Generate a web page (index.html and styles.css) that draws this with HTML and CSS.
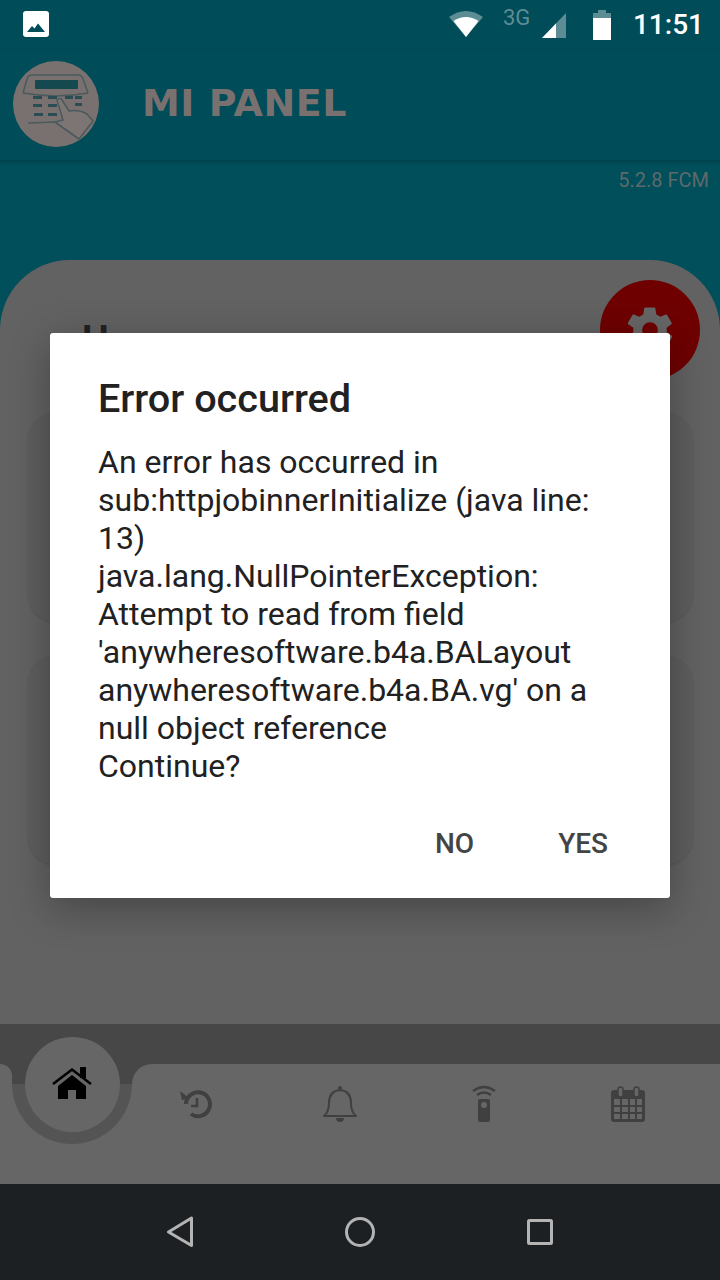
FILE: index.html
```html
<!DOCTYPE html>
<html lang="en">
<head>
    <meta charset="UTF-8">
    <meta name="viewport" content="width=device-width, initial-scale=1.0">
    <title>Mi Panel</title>
    <link rel="stylesheet" href="styles.css">
</head>
<body>
    <div class="screen">
        <div class="status-bar">
            <svg class="photo-icon" width="26" height="26" viewBox="0 0 26 26">
                <rect width="26" height="26" rx="3" fill="#fff"/>
                <path d="M4 21 L9 15 L11.500 17.500 L15 12.500 L22 21 Z" fill="#004c58"/>
            </svg>
            <div class="status-right">
                <svg class="wifi" width="34" height="27" viewBox="0 0 34 27">
                    <path d="M0 7 Q17 -5 34 7 L17 27 Z" fill="#5c8d95"/>
                    <path d="M4.500 11 Q17 3 29.500 11 L17 27 Z" fill="#fff"/>
                </svg>
                <span class="net-type">3G</span>
                <svg class="signal" width="24" height="25" viewBox="0 0 24 25">
                    <path d="M0 25 L24 0 L24 25 Z" fill="#5c8d95"/>
                    <path d="M0 25 L14 10.500 L14 25 Z" fill="#fff"/>
                </svg>
                <svg class="battery" width="18" height="30" viewBox="0 0 18 30">
                    <path d="M5 0 H13 V3 H18 V9 H0 V3 H5 Z" fill="#5c8d95"/>
                    <rect y="8" width="18" height="22" fill="#fff"/>
                </svg>
                <span class="clock">11:51</span>
            </div>
        </div>

        <header class="app-bar">
            <svg class="logo" width="86" height="86" viewBox="0 0 86 86">
                <circle cx="43" cy="43" r="43" fill="#78716f"/>
                <path d="M10 32 L14 18 Q15 14 19 14 H65 Q69 14 70 18 L75 32" fill="none" stroke="#4a5a5c" stroke-width="1.500"/>
                <path d="M10 32 Q43 38 75 32" fill="none" stroke="#4a5a5c" stroke-width="1.500"/>
                <rect x="22" y="19" width="43" height="9" rx="1" fill="#14494f"/>
                <g fill="#2a4d54">
                    <rect x="20" y="35" width="9" height="3"/>
                    <rect x="35" y="35" width="9" height="3"/>
                    <rect x="52" y="35" width="8" height="3"/>
                    <rect x="62" y="35" width="7" height="3"/>
                    <rect x="20" y="43" width="9" height="3"/>
                    <rect x="35" y="43" width="9" height="3"/>
                    <rect x="62" y="42" width="7" height="3"/>
                    <rect x="21" y="52" width="9" height="3"/>
                    <rect x="35" y="52" width="9" height="3"/>
                </g>
                <path d="M44 39 Q47 36 49 39 L56 50 Q66 48 74 53 L80 60 L66 78 L42 61 L50 59 Z" fill="#7c7573" stroke="#4a5a5c" stroke-width="1.500"/>
                <path d="M15 62 L42 61 L66 78" fill="none" stroke="#4a5a5c" stroke-width="1.500"/>
            </svg>
            <span class="brand">MI PANEL</span>
        </header>

        <div class="content">
            <div class="version">5.2.8 FCM</div>
            <main class="panel">
                <h2 class="panel-title">H</h2>
                <div class="card"></div>
                <div class="card"></div>
                <button class="fab">
                    <svg width="54" height="54" viewBox="0 0 24 24">
                        <path fill="#666" d="M19.400 13a7.600 7.600 0 0 0 0-2l2.100-1.600a.5.5 0 0 0 .1-.6l-2-3.500a.5.5 0 0 0-.6-.2l-2.500 1a7.400 7.400 0 0 0-1.700-1l-.4-2.600a.5.5 0 0 0-.5-.5h-4a.5.5 0 0 0-.5.4l-.4 2.700a7.600 7.600 0 0 0-1.700 1l-2.500-1a.5.5 0 0 0-.6.2l-2 3.500a.5.5 0 0 0 .1.6L4.600 11a7.600 7.600 0 0 0 0 2l-2.100 1.600a.5.5 0 0 0-.1.6l2 3.500a.5.5 0 0 0 .6.2l2.500-1a7.400 7.400 0 0 0 1.700 1l.4 2.600a.5.5 0 0 0 .5.5h4a.5.5 0 0 0 .5-.4l.4-2.700a7.600 7.600 0 0 0 1.700-1l2.500 1a.5.5 0 0 0 .6-.2l2-3.500a.5.5 0 0 0-.1-.6zM12 15.500a3.500 3.500 0 1 1 0-7 3.500 3.500 0 0 1 0 7z"/>
                    </svg>
                </button>
            </main>
        </div>

        <nav class="tab-bar">
            <div class="tab-stub"></div>
            <div class="tab-home">
                <div class="home-ring">
                    <div class="home-circle">
                        <svg width="40" height="34" viewBox="0 0 40 34">
                            <rect x="28" y="0" width="6" height="11" fill="#000"/>
                            <path d="M1 17 L20 2.500 L39 17" fill="none" stroke="#000" stroke-width="2.500"/>
                            <path d="M6 19 L20 8 L34 19 V32 H24 V23 H16 V32 H6 Z" fill="#000"/>
                        </svg>
                    </div>
                </div>
            </div>
            <div class="tab-items">
                <svg class="tab-icon tab-history" width="32" height="32" viewBox="0 0 32 32">
                    <path d="M6 16 A12 12 0 1 1 11 26" fill="none" stroke="#404040" stroke-width="4"/>
                    <path d="M0 3 L9 10 L2 12 Z" fill="#404040"/>
                    <path d="M17 10 V18 H11" fill="none" stroke="#404040" stroke-width="2.500"/>
                </svg>
                <svg class="tab-icon tab-bell" width="34" height="37" viewBox="0 0 34 37">
                    <path d="M1 31 Q6 27 6 18 Q6 6 17 5 Q28 6 28 18 Q28 27 33 31 Z" fill="none" stroke="#404040" stroke-width="2" stroke-linejoin="round"/>
                    <circle cx="17" cy="3" r="2" fill="#404040"/>
                    <path d="M13 33 A4 4 0 0 0 21 33 Z" fill="#404040"/>
                </svg>
                <svg class="tab-icon tab-remote" width="24" height="37" viewBox="0 0 24 37">
                    <path d="M1 6 Q12 -2 23 6 M5 10 Q12 5 19 10" fill="none" stroke="#404040" stroke-width="2.500"/>
                    <rect x="6" y="14" width="12" height="23" rx="2" fill="#404040"/>
                    <circle cx="12" cy="20" r="3" fill="#666"/>
                </svg>
                <svg class="tab-icon tab-calendar" width="34" height="36" viewBox="0 0 34 36">
                    <rect y="4" width="34" height="32" rx="3" fill="#404040"/>
                    <g fill="#666">
                        <rect x="3" y="13" width="6" height="6"/>
                        <rect x="11" y="13" width="6" height="6"/>
                        <rect x="19" y="13" width="5" height="6"/>
                        <rect x="26" y="13" width="5" height="6"/>
                        <rect x="3" y="21" width="6" height="5"/>
                        <rect x="11" y="21" width="6" height="5"/>
                        <rect x="19" y="21" width="5" height="5"/>
                        <rect x="26" y="21" width="5" height="5"/>
                        <rect x="3" y="28" width="6" height="5"/>
                        <rect x="11" y="28" width="6" height="5"/>
                        <rect x="19" y="28" width="5" height="5"/>
                        <rect x="26" y="28" width="5" height="5"/>
                    </g>
                    <rect x="7" y="1" width="5" height="10" rx="2.500" fill="#666" stroke="#404040" stroke-width="1.500"/>
                    <rect x="23" y="1" width="5" height="10" rx="2.500" fill="#666" stroke="#404040" stroke-width="1.500"/>
                </svg>
            </div>
        </nav>

        <div class="system-nav">
            <svg width="28" height="32" viewBox="0 0 28 32">
                <path d="M25.500 2 V29.500 L2.500 16 Z" fill="none" stroke="#b4b4b4" stroke-width="3" stroke-linejoin="round"/>
            </svg>
            <svg width="32" height="32" viewBox="0 0 32 32">
                <circle cx="16" cy="16" r="13.500" fill="none" stroke="#b4b4b4" stroke-width="3"/>
            </svg>
            <svg width="28" height="28" viewBox="0 0 28 28">
                <rect x="2.500" y="2.500" width="23" height="23" rx="1" fill="none" stroke="#b4b4b4" stroke-width="3"/>
            </svg>
        </div>

        <div class="dialog">
            <h1 class="dialog-title">Error occurred</h1>
            <p class="dialog-body">An error has occurred in<br>sub:httpjobinnerInitialize (java line:<br>13)<br>java.lang.NullPointerException:<br>Attempt to read from field<br>'anywheresoftware.b4a.BALayout<br>anywheresoftware.b4a.BA.vg' on a<br>null object reference<br>Continue?</p>
            <div class="dialog-actions">
                <button class="dialog-btn">NO</button>
                <button class="dialog-btn">YES</button>
            </div>
        </div>
    </div>
</body>
</html>
```

FILE: styles.css
```css
body {
    margin: 0;
    font-family: Roboto, sans-serif;
    background-color: #000;
}

.screen {
    position: relative;
    width: 720px;
    height: 1280px;
    overflow: hidden;
    display: flex;
    flex-direction: column;
    background-color: #004c58;
}

.status-bar {
    height: 50px;
    flex: none;
    display: flex;
    justify-content: space-between;
    align-items: center;
    padding: 0 16px 0 23px;
}

.photo-icon {
    margin-bottom: 2px;
}

.status-right {
    display: flex;
    align-items: flex-start;
    padding-top: 5px;
    height: 40px;
    box-sizing: border-box;
}

.net-type {
    margin-left: 20px;
    width: 39px;
    font-size: 22px;
    line-height: 16px;
    color: #5c8d95;
}

.signal {
    margin-top: 3px;
}

.battery {
    margin-left: 27px;
}

.clock {
    margin-left: 22px;
    font-size: 28px;
    font-weight: 500;
    line-height: 30px;
    color: #fff;
}

.app-bar {
    height: 110px;
    flex: none;
    display: flex;
    align-items: center;
    padding-left: 13px;
    box-sizing: border-box;
    box-shadow: 0 2px 4px rgba(0, 0, 0, 0.2);
    position: relative;
}

.logo {
    margin-bottom: 3px;
}

.brand {
    margin-left: 43px;
    margin-bottom: 4px;
    font-family: "DejaVu Sans", sans-serif;
    font-size: 38px;
    font-weight: 700;
    letter-spacing: 0.5px;
    color: #78716f;
}

.content {
    flex: 1;
    display: flex;
    flex-direction: column;
    background-color: #004f5b;
}

.version {
    height: 100px;
    flex: none;
    padding: 8px 11px 0 0;
    box-sizing: border-box;
    text-align: right;
    font-size: 20px;
    line-height: 24px;
    color: #5d6a6c;
}

.panel {
    flex: 1;
    position: relative;
    padding: 59px 28px 0;
    background-color: #626263;
    border-radius: 70px 70px 0 0;
}

.panel-title {
    margin: 0 0 0 54px;
    height: 93px;
    font-size: 38px;
    line-height: 42px;
    font-weight: 700;
    color: #222;
}

.card {
    width: 665px;
    height: 210px;
    margin-bottom: 33px;
    box-sizing: border-box;
    border-radius: 28px;
    background-color: #5e5e5e;
    box-shadow: 0 1px 2px rgba(0, 0, 0, 0.12);
}

.fab {
    position: absolute;
    top: 20px;
    left: 600px;
    width: 100px;
    height: 100px;
    padding: 0;
    display: flex;
    align-items: center;
    justify-content: center;
    border: none;
    border-radius: 50%;
    background-color: #6e0000;
}

.tab-bar {
    height: 160px;
    flex: none;
    display: flex;
    padding-top: 40px;
    box-sizing: border-box;
    background-color: #474747;
}

.tab-stub {
    width: 12px;
    border-top-right-radius: 16px;
    background-color: #666;
}

.tab-home {
    width: 120px;
    position: relative;
    background: linear-gradient(#474747 20px, #666 20px);
}

.home-ring {
    position: absolute;
    top: -40px;
    left: 0;
    width: 120px;
    height: 120px;
    display: flex;
    align-items: center;
    justify-content: center;
    border-radius: 50%;
    background: linear-gradient(#474747 50%, #545454 50%);
}

.home-circle {
    width: 95px;
    height: 95px;
    display: flex;
    align-items: center;
    justify-content: center;
    border-radius: 50%;
    background-color: #666;
}

.tab-items {
    flex: 1;
    position: relative;
    display: flex;
    align-items: flex-start;
    border-top-left-radius: 20px;
    background-color: #666;
}

.tab-icon {
    flex: none;
}

.tab-history {
    margin: 24px 0 0 48px;
}

.tab-bell {
    margin: 21px 0 0 111px;
}

.tab-remote {
    margin: 21px 0 0 115px;
}

.tab-calendar {
    margin: 22px 0 0 115px;
}

.system-nav {
    height: 96px;
    flex: none;
    display: flex;
    align-items: center;
    justify-content: space-between;
    padding: 0 166px;
    box-sizing: border-box;
    background-color: #1d2022;
}

.dialog {
    position: absolute;
    top: 333px;
    left: 50px;
    width: 620px;
    height: 565px;
    box-sizing: border-box;
    padding: 44px 48px 0 48px;
    border-radius: 3px;
    background-color: #fff;
    box-shadow: 0 10px 40px rgba(0, 0, 0, 0.3);
}

.dialog-title {
    margin: 0;
    font-size: 39.6px;
    line-height: 43px;
    font-weight: 500;
    color: #212121;
}

.dialog-body {
    margin: 23px 0 0;
    font-size: 32px;
    line-height: 38px;
    color: #212121;
}

.dialog-actions {
    display: flex;
    justify-content: flex-end;
    gap: 84px;
    margin: 43px 14px 0 0;
}

.dialog-btn {
    padding: 0;
    border: none;
    background: none;
    font-family: Roboto, sans-serif;
    font-size: 28px;
    font-weight: 500;
    line-height: 32px;
    color: #444;
}
```
